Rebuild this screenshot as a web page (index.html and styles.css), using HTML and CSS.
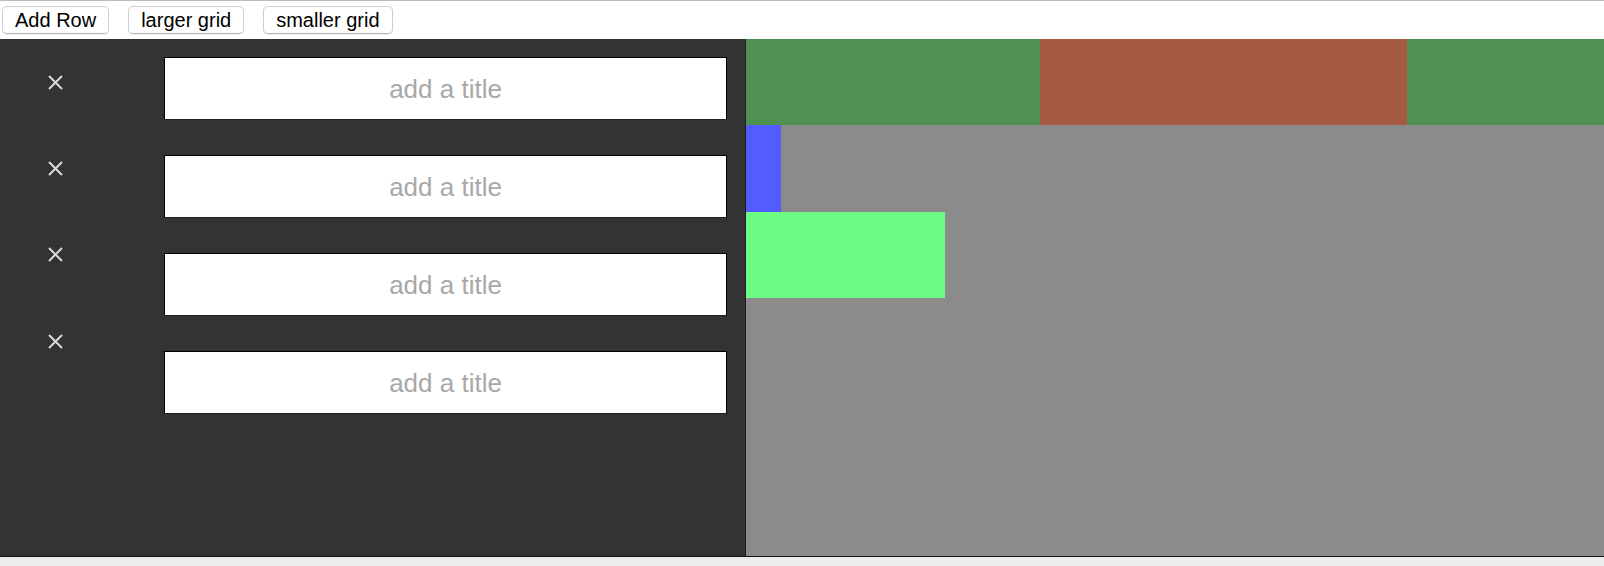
FILE: index.html
```html
<!DOCTYPE html>
<html lang="en">
<head>
    <meta charset="UTF-8">
    <title>Grid Rows</title>
    <link rel="stylesheet" href="styles.css">
</head>

<body>

<!-- Toolbar -->
<div class="toolbar">
    <button type="button">Add Row</button>
    <button type="button">larger grid</button>
    <button type="button">smaller grid</button>
</div>

<div class="main">

    <!-- Row editor -->
    <div class="editor">
        <div class="remove-col">
            <div class="remove-row"><svg width="17" height="17" viewBox="0 0 17 17"><path d="M2 2L15 15M15 2L2 15"/></svg></div>
            <div class="remove-row"><svg width="17" height="17" viewBox="0 0 17 17"><path d="M2 2L15 15M15 2L2 15"/></svg></div>
            <div class="remove-row"><svg width="17" height="17" viewBox="0 0 17 17"><path d="M2 2L15 15M15 2L2 15"/></svg></div>
            <div class="remove-row"><svg width="17" height="17" viewBox="0 0 17 17"><path d="M2 2L15 15M15 2L2 15"/></svg></div>
        </div>
        <div class="title-col">
            <input type="text" class="title-input" placeholder="add a title">
            <input type="text" class="title-input" placeholder="add a title">
            <input type="text" class="title-input" placeholder="add a title">
            <input type="text" class="title-input" placeholder="add a title">
        </div>
    </div>

    <!-- Grid preview -->
    <div class="grid">
        <div class="grid-row">
            <div class="cell green" style="width: 294px"></div>
            <div class="cell brown" style="width: 367px"></div>
            <div class="cell green" style="width: 197px"></div>
        </div>
        <div class="grid-row">
            <div class="cell blue" style="width: 35px"></div>
        </div>
        <div class="grid-row">
            <div class="cell light-green" style="width: 199px"></div>
        </div>
    </div>

</div>

</body>
</html>
```

FILE: styles.css
```css
/* Page styling */
body {
    margin: 0;
    font-family: 'Liberation Sans', Helvetica, Arial, sans-serif;
    background-color: #ECECEC;
}

/* Top toolbar */
.toolbar {
    display: flex;
    align-items: center;
    gap: 19px;
    height: 38px;
    padding-left: 2px;
    border-top: 1px solid #BBBBBB;
    background-color: #FFFFFF;
}

.toolbar button {
    height: 28px;
    padding: 0 12px;
    font-family: inherit;
    font-size: 20px;
    color: #000000;
    background-color: #FFFFFF;
    border: 1px solid #CFCFCF;
    border-bottom-color: #B5B5B5;
    border-radius: 5px;
    box-shadow: 0 1px 1px rgba(0,0,0,0.06);
    cursor: pointer;
}

/* Main area */
.main {
    display: flex;
    height: 517px;
    border-bottom: 1px solid #111111;
}

/* Left editor panel */
.editor {
    display: flex;
    width: 745px;
    background-color: #333333;
    border-right: 1px solid #1E1E1E;
}

.remove-col {
    width: 110px;
}

.remove-row {
    display: flex;
    align-items: center;
    justify-content: center;
    height: 86.33px;
}

.remove-row svg path {
    stroke: #DADADA;
    stroke-width: 2;
    fill: none;
}

.title-col {
    display: flex;
    flex-direction: column;
    gap: 35px;
    padding: 18px 0 0 54px;
}

.title-input {
    width: 563px;
    height: 63px;
    box-sizing: border-box;
    padding-top: 3px;
    border: 1px solid #000000;
    border-bottom-color: #222222;
    background-color: #FFFFFF;
    font-family: inherit;
    font-size: 26px;
    text-align: center;
    outline: none;
}

.title-input::placeholder {
    color: #A8A8A8;
}

/* Right grid preview */
.grid {
    flex: 1;
    background-color: #8B8B8B;
}

.grid-row {
    display: flex;
    height: 86.33px;
}

.cell {
    height: 100%;
}

.green {
    background-color: #4F9150;
}

.brown {
    background-color: #A55A43;
}

.blue {
    background-color: #545CFF;
}

.light-green {
    background-color: #6CFC84;
}
```
